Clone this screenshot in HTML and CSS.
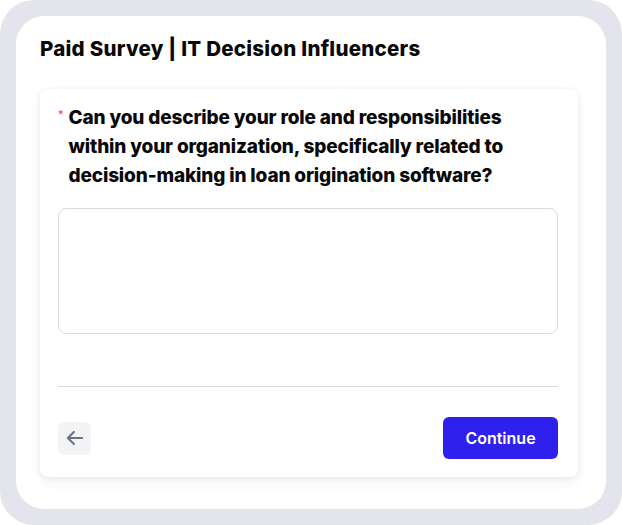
FILE: index.html
```html
<!DOCTYPE html>
<html lang="en">
<head>
    <meta charset="utf-8"/>
    <title>Paid Survey</title>
    <link rel="stylesheet" href="styles.css">
</head>
<body>
    <div class="frame">
        <div class="sheet">
            <h1 class="title">Paid Survey | IT Decision Influencers</h1>
            <div class="card">
                <div class="question">
                    <span class="required">*</span>
                    <p>Can you describe your role and responsibilities within your organization, specifically related to decision-making in loan origination software?</p>
                </div>
                <textarea class="answer"></textarea>
                <hr class="divider"/>
                <div class="actions">
                    <button class="back" type="button" aria-label="Back">
                        <svg width="22" height="22" viewBox="0 0 20 20" fill="none" stroke="#6b7280" stroke-width="1.9" stroke-linecap="round" stroke-linejoin="round">
                            <path d="M16.5 10H3.5M9 4.5L3.5 10L9 15.5"/>
                        </svg>
                    </button>
                    <button class="continue" type="button">Continue</button>
                </div>
            </div>
        </div>
    </div>
</body>
</html>
```

FILE: styles.css
```css
html, body {
    margin: 0;
    background: #fff;
}
body {
    font-family: Inter, "Noto Sans", sans-serif;
    color: #080808;
}
.frame {
    width: 622px;
    height: 525px;
    box-sizing: border-box;
    padding: 16px;
    background: #e4e4ec;
    border-radius: 34px;
}
.sheet {
    height: 100%;
    box-sizing: border-box;
    background: #fff;
    border-radius: 28px;
    padding: 20px 28px 0 24px;
}
.title {
    margin: 0;
    font-size: 20.5px;
    font-weight: 800;
    line-height: 26px;
    letter-spacing: 0.25px;
}
.card {
    margin-top: 27px;
    background: #fff;
    border-radius: 8px;
    box-shadow: 0 1px 6px rgba(0, 0, 0, 0.08), 0 6px 14px rgba(0, 0, 0, 0.04);
    padding: 14px 20px 18px 18px;
}
.question {
    display: flex;
    gap: 5px;
}
.required {
    color: #f04444;
    font-size: 11px;
    line-height: 22px;
}
.question p {
    margin: 0;
    font-size: 19px;
    font-weight: 800;
    line-height: 29px;
    letter-spacing: -0.15px;
}
.answer {
    display: block;
    width: 100%;
    height: 126px;
    box-sizing: border-box;
    margin-top: 18px;
    border: 1px solid #dcdcdf;
    border-radius: 8px;
    resize: none;
}
.divider {
    margin: 52px 0 0;
    border: 0;
    border-top: 1px solid #dcdcdf;
}
.actions {
    display: flex;
    justify-content: space-between;
    align-items: center;
    margin-top: 30px;
}
.back {
    width: 33px;
    height: 33px;
    padding: 0;
    border: 0;
    border-radius: 6px;
    background: #f3f4f6;
    display: flex;
    align-items: center;
    justify-content: center;
}
.continue {
    width: 115px;
    height: 42px;
    border: 0;
    border-radius: 6px;
    background: #2f20ee;
    color: #fff;
    font-family: Inter, "Noto Sans", sans-serif;
    font-size: 16px;
    font-weight: 600;
}
```
